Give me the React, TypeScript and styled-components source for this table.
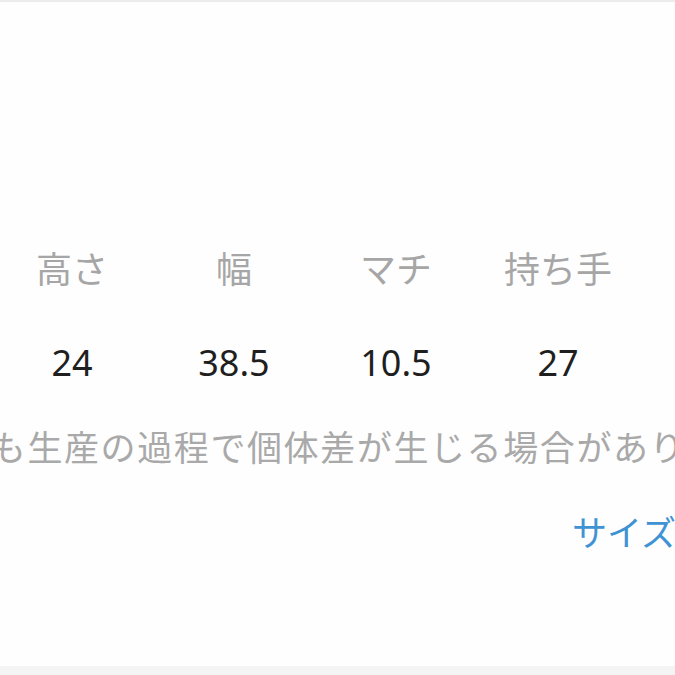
import React from 'react'
import styled, { createGlobalStyle } from 'styled-components'

const GlobalStyle = createGlobalStyle`
    html, body {
        margin:0;
        padding:0;
        background:#ffffff;
        overflow:hidden;
    }
    body {
        font-family:"Noto Sans", "Noto Sans CJK JP", sans-serif;
    }
`

const Page = styled.div`
    width:675px;
    height:675px;
    display:flex;
    flex-direction:column;
    overflow:hidden;
    background:#fefefe;
    border-top:2px solid #ececec;
    box-sizing:border-box;
`

const Content = styled.main`
    flex:1;
    padding-top:241px;
`

const SizeTable = styled.div`
    display:grid;
    grid-template-columns:repeat(4, 162px);
    margin-left:-9px;
`

const Cell = styled.div<{ $head?: boolean }>`
    height:${p => (p.$head ? '96px' : '83px')};
    line-height:48px;
    text-align:center;
    font-size:36px;
    color:${p => (p.$head ? '#a6a6a6' : '#1f1f1f')};
    font-family:${p => (p.$head ? '"Noto Sans CJK JP", sans-serif' : '"Noto Sans", "Noto Sans CJK JP", sans-serif')};
`

const Note = styled.p`
    margin:0;
    height:85px;
    line-height:48px;
    font-size:35px;
    letter-spacing:1.6px;
    font-family:"Noto Sans CJK JP", sans-serif;
    color:#a9a9a9;
    white-space:nowrap;
    text-indent:-119px;
`

const LinkRow = styled.div`
    display:flex;
    justify-content:flex-start;
    padding-left:572px;
    white-space:nowrap;
`

const SizeLink = styled.a`
    font-size:35px;
    line-height:48px;
    font-family:"Noto Sans CJK JP", sans-serif;
    color:#3f93d3;
    text-decoration:none;
`

const Footer = styled.footer`
    height:9px;
    background:#f4f4f4;
`

const heads = ['高さ', '幅', 'マチ', '持ち手']
const values = ['24', '38.5', '10.5', '27']

const App = () => {
    return (
        <React.Fragment>
            <GlobalStyle />
            <Page>
                <Content>
                    <SizeTable>
                        {heads.map(h => <Cell key={h} $head>{h}</Cell>)}
                        {values.map(v => <Cell key={v}>{v}</Cell>)}
                    </SizeTable>
                    <Note>いずれも生産の過程で個体差が生じる場合があります。</Note>
                    <LinkRow>
                        <SizeLink href="#">サイズの測り方</SizeLink>
                    </LinkRow>
                </Content>
                <Footer />
            </Page>
        </React.Fragment>
    )
}

export default App
